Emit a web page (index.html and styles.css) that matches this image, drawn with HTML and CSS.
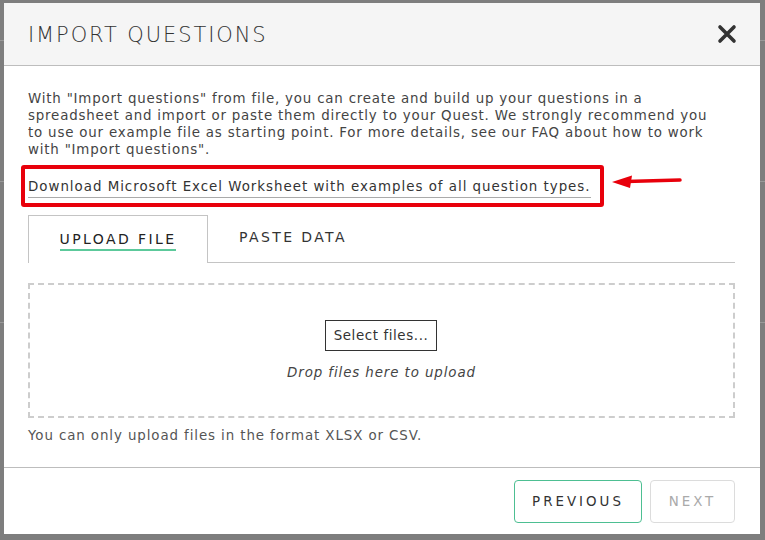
FILE: index.html
```html
<!DOCTYPE html>
<html lang="en">

<head>
    <meta charset="utf-8">
    <title>Import questions</title>
    <link rel="stylesheet" href="styles.css">
</head>

<body>
    <!-- page behind the dialog -->
    <div class="backdrop">
        <div class="bg-row"></div>
        <div class="bg-row"></div>
        <div class="bg-row"></div>
        <div class="bg-settings">&#9650; QUESTION SETTINGS</div>
    </div>

    <div class="modal">
        <div class="modal-header">
            <h2>IMPORT QUESTIONS</h2>
            <span class="close">
                <svg width="20" height="20" viewBox="0 0 20 20"><path d="M3 3 L17 17 M17 3 L3 17" stroke="#333" stroke-width="3.6" stroke-linecap="round"/></svg>
            </span>
        </div>

        <div class="modal-body">
            <p class="intro">With "Import questions" from file, you can create and build up your questions in a spreadsheet and import or paste them directly to your Quest. We strongly recommend you to use our example file as starting point. For more details, see our FAQ about how to work with "Import questions".</p>

            <div class="download-row">
                <div class="highlight">
                    <a href="#" class="download">Download Microsoft Excel Worksheet with examples of all question types.</a>
                </div>
                <svg class="arrow" width="72" height="16" viewBox="0 0 72 16">
                    <path d="M16 7.5 L70 6" stroke="#e8000b" stroke-width="3.5" stroke-linecap="round"/>
                    <path d="M2 8 L22 1.5 L20 14 Z" fill="#e8000b"/>
                </svg>
            </div>

            <div class="tabs">
                <div class="tab active"><span>UPLOAD FILE</span></div>
                <div class="tab"><span>PASTE DATA</span></div>
            </div>

            <div class="dropzone">
                <button class="select-btn">Select files...</button>
                <div class="drop-text">Drop files here to upload</div>
            </div>
            <p class="note">You can only upload files in the format XLSX or CSV.</p>
        </div>

        <div class="modal-footer">
            <button class="btn btn-prev">PREVIOUS</button>
            <button class="btn btn-next">NEXT</button>
        </div>
    </div>
</body>

</html>
```

FILE: styles.css
```css
body {
    margin: 0;
    background-color: #7e7e7e;
    font-family: 'DejaVu Sans', sans-serif;
    overflow: hidden;
    height: 540px;
}

.backdrop {
    padding-top: 40px;
}

.bg-row {
    height: 1px;
    background-color: #999;
    margin-bottom: 140px;
}

.bg-settings {
    margin-top: 69px;
    padding-left: 75px;
    color: #1e1e1e;
    font-size: 15px;
    letter-spacing: 1px;
}

.modal {
    position: absolute;
    left: 4px;
    top: 3px;
    width: 756px;
    height: 531px;
    background-color: #fff;
    display: flex;
    flex-direction: column;
}

.modal-header {
    height: 62px;
    background-color: #f5f5f5;
    border-bottom: 1px solid #bdbdbd;
    display: flex;
    align-items: center;
    justify-content: space-between;
    padding: 0 23px 0 24px;
}

.modal-header h2 {
    margin: 0;
    font-size: 21px;
    font-weight: 200;
    color: #333;
    letter-spacing: 1.9px;
    padding-top: 2px;
}

.close {
    display: flex;
}

.modal-body {
    padding: 24px 25px 0 24px;
    flex: 1;
}

.intro {
    margin: 0;
    font-size: 13.4px;
    line-height: 17px;
    letter-spacing: 0.8px;
    color: #444;
    width: 690px;
}

.download-row {
    display: flex;
    align-items: center;
    margin-top: 7px;
    margin-left: -7px;
}

.highlight {
    border: 4px solid #e8000b;
    border-radius: 3px;
    padding: 8px 9px 8px 3px;
    line-height: 17px;
}

.download {
    color: #333;
    font-size: 13.4px;
    letter-spacing: 0.98px;
    text-decoration: none;
    border-bottom: 1px solid #aaa;
    padding-bottom: 3px;
}

.arrow {
    margin-left: 6px;
    margin-top: -9px;
}

.tabs {
    display: flex;
    margin-top: 8px;
    border-bottom: 1px solid #c4c4c4;
    height: 47px;
}

.tab {
    width: 180px;
    display: flex;
    align-items: center;
    justify-content: center;
    font-size: 14px;
    letter-spacing: 2.4px;
    color: #333;
    padding-bottom: 2px;
    box-sizing: border-box;
}

.tab.active {
    border: 1px solid #c4c4c4;
    border-bottom: none;
    height: 48px;
    background-color: #fff;
    padding-top: 4px;
}

.tab.active span {
    color: #222;
    border-bottom: 2px solid #5cc99b;
    padding-bottom: 2px;
}

.tab + .tab {
    width: 170px;
    padding-bottom: 4px;
}

.dropzone {
    margin-top: 20px;
    height: 135px;
    border: 2px dashed #cdcdcd;
    box-sizing: border-box;
    display: flex;
    flex-direction: column;
    align-items: center;
    padding-top: 35px;
}

.select-btn {
    font-family: 'DejaVu Sans', sans-serif;
    font-size: 13.4px;
    letter-spacing: 0.6px;
    color: #333;
    background-color: #fff;
    border: 1px solid #333;
    height: 31px;
    width: 112px;
    margin-left: -1px;
}

.drop-text {
    margin-top: 14px;
    font-style: italic;
    font-size: 13.4px;
    letter-spacing: 0.9px;
    color: #444;
}

.note {
    margin: 10px 0 0;
    font-size: 13.4px;
    letter-spacing: 0.9px;
    color: #555;
}

.modal-footer {
    border-top: 1px solid #bdbdbd;
    height: 67px;
    display: flex;
    justify-content: flex-end;
    align-items: flex-start;
    gap: 8px;
    padding: 12px 25px 0 0;
    box-sizing: border-box;
}

.btn {
    font-family: 'DejaVu Sans', sans-serif;
    height: 43px;
    background-color: #fff;
    border-radius: 4px;
    font-size: 13.4px;
    letter-spacing: 3px;
}

.btn-prev {
    width: 128px;
    border: 1px solid #4dbf92;
    color: #333;
}

.btn-next {
    width: 85px;
    border: 1px solid #dcdcdc;
    color: #aaa;
}
```
